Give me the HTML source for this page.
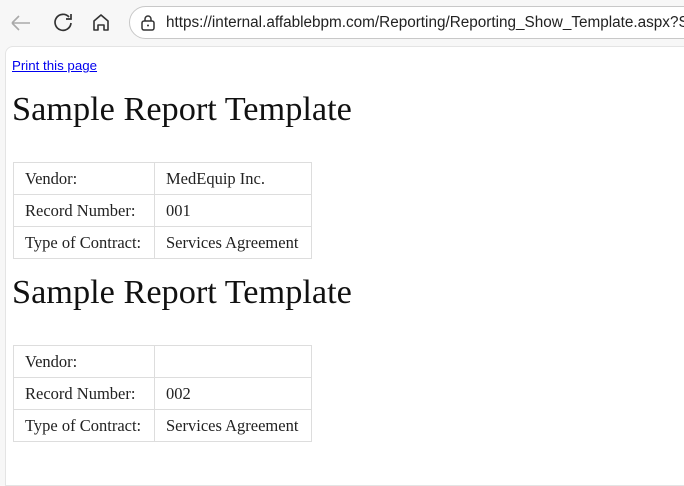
<!DOCTYPE html>
<html><head><style>
body{margin:0;width:684px;height:464px;overflow:hidden;background:#f7f7f7;font-family:"Liberation Serif",serif;position:relative}
.bar{position:absolute;left:0;top:0;width:684px;height:46px;background:#f7f7f7}
.url{position:absolute;left:129px;top:6px;width:600px;height:33px;border:1px solid #c8c8c8;border-radius:17px;background:#fff;box-sizing:border-box}
.url span{position:absolute;left:36px;top:7px;font-family:"Liberation Sans",sans-serif;font-size:15.3px;color:#222;white-space:nowrap}
.page{position:absolute;left:5px;top:46px;width:700px;height:440px;background:#fff;border-top-left-radius:8px;border:1px solid #e4e4e4;box-sizing:border-box}
a{position:absolute;left:12px;top:58px;font-family:"Liberation Sans",sans-serif;font-size:13.3px;color:#0000ee}
h1{position:absolute;left:12px;margin:0;font-weight:normal;font-size:34.3px;color:#111;white-space:nowrap}
table{position:absolute;left:13px;border-collapse:collapse;font-size:16.5px;color:#222}
td{border:1px solid #ddd;height:32px;padding:0 11px;box-sizing:border-box}
td:first-child{width:141px}td:last-child{width:157px;white-space:nowrap}
</style></head><body>
<div class="bar"></div>
<svg style="position:absolute;left:0;top:0" width="130" height="46">
<path d="M12 23h18M12 23l7-7M12 23l7 7" stroke="#aaa" stroke-width="1.6" fill="none"/>
<path d="M69 17a8 8 0 1 0 2 6" stroke="#333" stroke-width="1.7" fill="none"/><path d="M71 14v5h-5" stroke="#333" stroke-width="1.7" fill="none"/>
<path d="M94 30v-9l7-6 7 6v9h-4v-5h-6v5z" stroke="#333" stroke-width="1.6" fill="none" stroke-linejoin="round"/>
</svg>
<div class="url"><svg style="position:absolute;left:10px;top:7px" width="16" height="18"><rect x="2" y="7" width="12" height="9" rx="2" stroke="#333" stroke-width="1.5" fill="none"/><path d="M5 7V5a3 3 0 0 1 6 0v2" stroke="#333" stroke-width="1.5" fill="none"/><circle cx="8" cy="11.5" r="1" fill="#333"/></svg><span>https://internal.affablebpm.com/Reporting/Reporting_Show_Template.aspx?S</span></div>
<div class="page"></div>
<a href="#">Print this page</a>
<h1 style="top:90px">Sample Report Template</h1>
<table style="top:162px"><tr><td>Vendor:</td><td>MedEquip Inc.</td></tr><tr><td>Record Number:</td><td>001</td></tr><tr><td>Type of Contract:</td><td>Services Agreement</td></tr></table>
<h1 style="top:273px">Sample Report Template</h1>
<table style="top:345px"><tr><td>Vendor:</td><td></td></tr><tr><td>Record Number:</td><td>002</td></tr><tr><td>Type of Contract:</td><td>Services Agreement</td></tr></table>
</body></html>
